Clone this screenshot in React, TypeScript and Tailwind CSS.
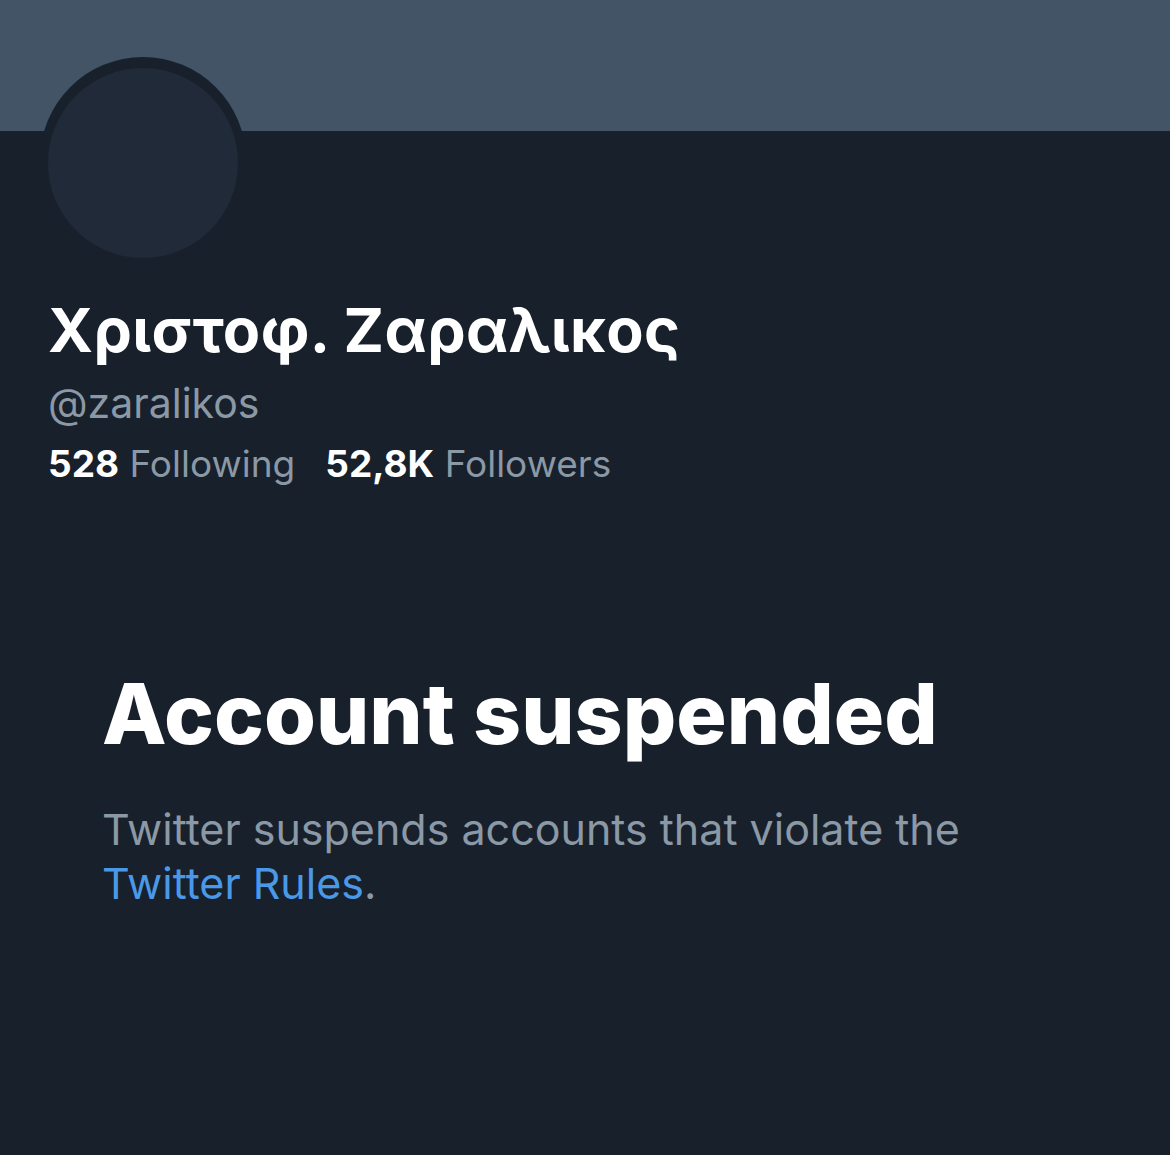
import React from 'react';

const App = () => {
  return (
    <div
      className="w-[1170px] h-[1155px] bg-[#18202b] overflow-hidden"
      style={{ fontFamily: 'Inter, "Noto Sans", sans-serif' }}
    >
      <div className="h-[131px] bg-[#425466]" />
      <div className="px-[48px]">
        {/* avatar placeholder */}
        <div className="-mt-[74px] -ml-[8px] w-[206px] h-[206px] rounded-full bg-[#18202b] pt-[11px] pl-[8px]">
          <div className="w-[190px] h-[190px] rounded-full bg-[#212a38]" />
        </div>

        <h1 className="mt-[35px] text-[61px] leading-[64px] font-bold text-white tracking-[0.4px]">
          Χριστοφ. Ζαραλικος
        </h1>
        <p className="mt-[17px] text-[41px] leading-[48px] text-[#8b98a5]">@zaralikos</p>
        <div className="mt-[14px] flex gap-[30px] text-[37px] leading-[46px]">
          <span>
            <span className="font-bold text-white">528</span>
            <span className="text-[#8b98a5]"> Following</span>
          </span>
          <span>
            <span className="font-bold text-white">52,8K</span>
            <span className="text-[#8b98a5]"> Followers</span>
          </span>
        </div>
      </div>

      <div className="px-[102px] mt-[177px]">
        <h2 className="text-[84px] leading-[100px] font-extrabold text-white">Account suspended</h2>
        <p className="mt-[38px] text-[43px] leading-[54px] text-[#8b98a5] max-w-[920px]">
          Twitter suspends accounts that violate the{' '}
          <span className="text-[#4a99e9]">Twitter Rules</span>.
        </p>
      </div>
    </div>
  );
};

export default App;
